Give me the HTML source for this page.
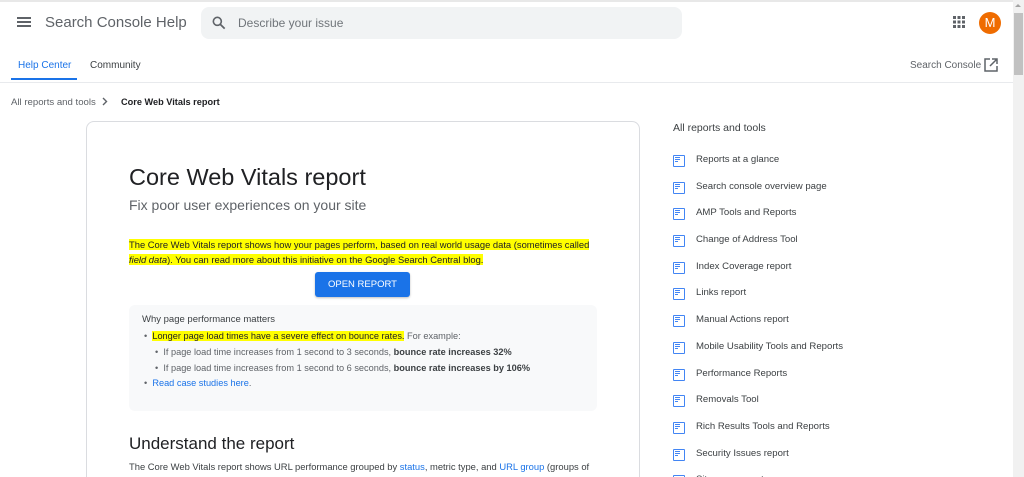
<!DOCTYPE html>
<html style="overflow:hidden;height:477px"><head><meta charset="utf-8"><style>
*{box-sizing:border-box;margin:0;padding:0}
body{width:1024px;height:477px;overflow:hidden;background:#fff;font-family:"Liberation Sans",Arial,sans-serif;color:#202124;position:relative}
.a{position:absolute;white-space:nowrap}
.hl{background:#ff0}
</style></head><body>
<div class="a" style="left:0;top:0;width:1013px;height:2px;background:#e8e8e8"></div>
<div class="a" style="left:17px;top:17px;width:14px;height:2px;background:#5f6368;box-shadow:0 4px 0 #5f6368,0 8px 0 #5f6368"></div>
<div class="a" style="left:45px;top:14px;font-size:15px;color:#5f6368">Search Console Help</div>
<div class="a" style="left:201px;top:7px;width:481px;height:32px;background:#f1f3f4;border-radius:8px"></div>
<svg class="a" style="left:211px;top:15px" width="16" height="16" viewBox="0 0 24 24"><circle cx="9.5" cy="9.5" r="6" fill="none" stroke="#5f6368" stroke-width="2.4"/><path d="M14 14l6.5 6.5" stroke="#5f6368" stroke-width="2.6"/></svg>
<div class="a" style="left:238px;top:16px;font-size:12px;color:#70757a">Describe your issue</div>
<svg class="a" style="left:953px;top:16px" width="12" height="12" viewBox="0 0 12 12" fill="#5f6368"><rect x="0" y="0" width="3" height="3"/><rect x="4.5" y="0" width="3" height="3"/><rect x="9" y="0" width="3" height="3"/><rect x="0" y="4.5" width="3" height="3"/><rect x="4.5" y="4.5" width="3" height="3"/><rect x="9" y="4.5" width="3" height="3"/><rect x="0" y="9" width="3" height="3"/><rect x="4.5" y="9" width="3" height="3"/><rect x="9" y="9" width="3" height="3"/></svg>
<div class="a" style="left:979px;top:12px;width:22px;height:22px;border-radius:50%;background:#ef6c00;color:#fff;font-size:13px;text-align:center;line-height:22px">M</div>
<div class="a" style="left:18px;top:60px;font-size:10px;color:#1a73e8">Help Center</div>
<div class="a" style="left:90px;top:60px;font-size:10px;color:#3c4043">Community</div>
<div class="a" style="left:11px;top:78px;width:66px;height:2px;background:#1a73e8"></div>
<div class="a" style="left:0;top:82px;width:1013px;height:1px;background:#e8eaed"></div>
<div class="a" style="left:910px;top:60px;font-size:10px;color:#5f6368">Search Console</div>
<svg class="a" style="left:984px;top:58px" width="14" height="14" viewBox="0 0 14 14"><path d="M6 1H1v12h12V8" fill="none" stroke="#5f6368" stroke-width="1.5"/><path d="M8 1h5v5M13 1L6 8" fill="none" stroke="#5f6368" stroke-width="1.5"/></svg>
<div class="a" style="left:11px;top:97px;font-size:9.6px;color:#5f6368">All reports and tools</div>
<svg class="a" style="left:102px;top:97px" width="6" height="9" viewBox="0 0 6 9"><path d="M1 1l3.5 3.5L1 8" fill="none" stroke="#5f6368" stroke-width="1.4"/></svg>
<div class="a" style="left:121px;top:97px;font-size:9.2px;color:#202124;font-weight:bold">Core Web Vitals report</div>
<div class="a" style="left:86px;top:121px;width:554px;height:356px;border:1px solid #dadce0;border-bottom:none;border-radius:8px 8px 0 0"></div>
<div class="a" style="left:129px;top:164px;font-size:23.5px;color:#202124">Core Web Vitals report</div>
<div class="a" style="left:129px;top:197px;font-size:14px;color:#5f6368">Fix poor user experiences on your site</div>
<div class="a" style="left:129px;top:238px;font-size:9.4px;line-height:14.5px;color:#202124"><span class="hl">The Core Web Vitals report shows how your pages perform, based on real world usage data (sometimes called</span><br><span class="hl"><i>field data</i>). You can read more about this initiative on the Google Search Central blog.</span></div>
<div class="a" style="left:315px;top:272px;width:95px;height:25px;background:#1a73e8;border-radius:3px;color:#fff;font-size:9.5px;text-align:center;line-height:25px;box-shadow:0 1px 2px rgba(0,0,0,.25)">OPEN REPORT</div>
<div class="a" style="left:129px;top:305px;width:468px;height:106px;background:#f8f9fa;border-radius:6px"></div>
<div class="a" style="left:142px;top:314px;font-size:9.5px;color:#3c4043">Why page performance matters</div>
<div class="a" style="left:144px;top:331px;font-size:9.2px;color:#5f6368">•&nbsp; <span class="hl" style="color:#202124">Longer page load times have a severe effect on bounce rates.</span> For example:</div>
<div class="a" style="left:155px;top:347px;font-size:9.2px;color:#5f6368">•&nbsp; If page load time increases from 1 second to 3 seconds, <b style="color:#3c4043">bounce rate increases 32%</b></div>
<div class="a" style="left:155px;top:363px;font-size:9.2px;color:#5f6368">•&nbsp; If page load time increases from 1 second to 6 seconds, <b style="color:#3c4043">bounce rate increases by 106%</b></div>
<div class="a" style="left:144px;top:378px;font-size:9.2px;color:#5f6368">•&nbsp; <span style="color:#1a73e8">Read case studies here</span>.</div>
<div class="a" style="left:129px;top:434px;font-size:17px;color:#202124">Understand the report</div>
<div class="a" style="left:129px;top:461px;font-size:9.4px;color:#3c4043">The Core Web Vitals report shows URL performance grouped by <span style="color:#1a73e8">status</span>, metric type, and <span style="color:#1a73e8">URL group</span> (groups of</div>
<div class="a" style="left:673px;top:122px;font-size:10.5px;color:#3c4043">All reports and tools</div>
<div class="a" style="left:673px;top:154px;height:323px;width:300px;overflow:hidden">
<style>.it{height:26.7px;font-size:9.6px;color:#3c4043;position:relative;padding-left:23px;line-height:12px}.it:before{content:"";position:absolute;left:0;top:1px;width:10px;height:10px;border:1.5px solid #4285f4;border-radius:1px;background:linear-gradient(#4285f4,#4285f4) 1px 1px/5px 1px no-repeat,linear-gradient(#4285f4,#4285f4) 1px 3px/5px 1px no-repeat,linear-gradient(#4285f4,#4285f4) 1px 5px/3px 1px no-repeat}</style>
<div class="it">Reports at a glance</div><div class="it">Search console overview page</div><div class="it">AMP Tools and Reports</div><div class="it">Change of Address Tool</div><div class="it">Index Coverage report</div><div class="it">Links report</div><div class="it">Manual Actions report</div><div class="it">Mobile Usability Tools and Reports</div><div class="it">Performance Reports</div><div class="it">Removals Tool</div><div class="it">Rich Results Tools and Reports</div><div class="it">Security Issues report</div><div class="it">Sitemaps report</div>
</div>
<div class="a" style="left:1013px;top:0;width:11px;height:477px;background:#f1f1f1"></div>
<div class="a" style="left:1014px;top:13px;width:9px;height:62px;background:#c1c1c1"></div>
<div class="a" style="left:1015px;top:4px;width:0;height:0;border:3px solid transparent;border-bottom-color:#a3a3a3;border-top:0"></div>
</body></html>
